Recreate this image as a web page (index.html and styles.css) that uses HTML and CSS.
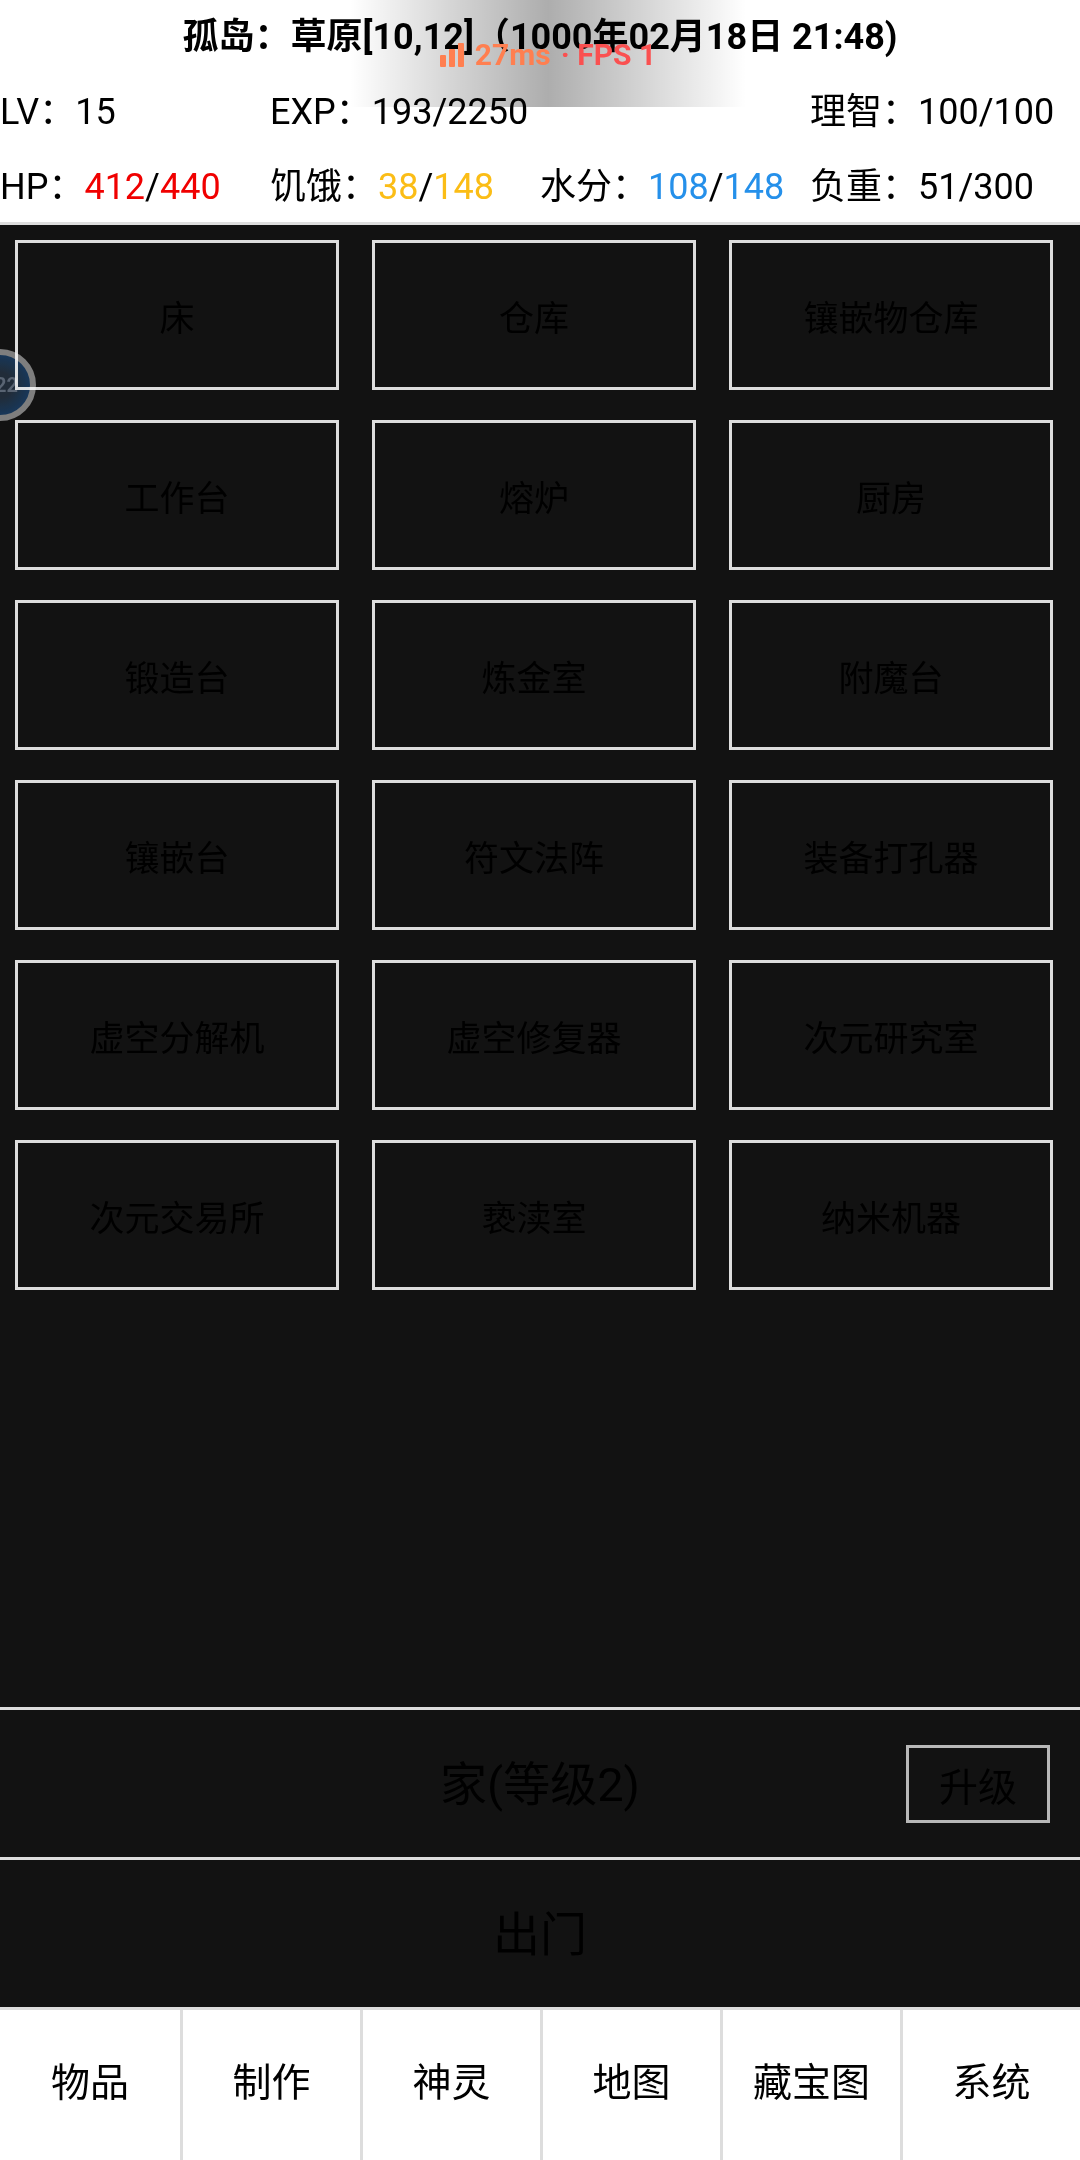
FILE: index.html
```html
<!DOCTYPE html>
<html lang="zh-CN">
<head>
  <meta charset="UTF-8">
  <meta name="viewport" content="width=device-width, initial-scale=1.0">
  <title>孤岛</title>
  <link rel="stylesheet" href="styles.css">
</head>
<body>
  <!-- Status -->
  <header class="status">
    <h1>孤岛：草原[10,12]（1000年02月18日 21:48)</h1>
    <div class="stats">
      <div>LV：15</div>
      <div class="wide">EXP：193/2250</div>
      <div>理智：100/100</div>
      <div>HP：<span class="hp">412</span>/<span class="hp">440</span></div>
      <div>饥饿：<span class="food">38</span>/<span class="food">148</span></div>
      <div>水分：<span class="water">108</span>/<span class="water">148</span></div>
      <div>负重：51/300</div>
    </div>
  </header>

  <!-- Buildings -->
  <main class="buildings">
    <button type="button">床</button>
    <button type="button">仓库</button>
    <button type="button">镶嵌物仓库</button>
    <button type="button">工作台</button>
    <button type="button">熔炉</button>
    <button type="button">厨房</button>
    <button type="button">锻造台</button>
    <button type="button">炼金室</button>
    <button type="button">附魔台</button>
    <button type="button">镶嵌台</button>
    <button type="button">符文法阵</button>
    <button type="button">装备打孔器</button>
    <button type="button">虚空分解机</button>
    <button type="button">虚空修复器</button>
    <button type="button">次元研究室</button>
    <button type="button">次元交易所</button>
    <button type="button">亵渎室</button>
    <button type="button">纳米机器</button>
  </main>

  <!-- House -->
  <section class="house">
    <h2>家(等级2)</h2>
    <button type="button" class="upgrade">升级</button>
  </section>
  <button type="button" class="go-out">出门</button>

  <!-- Bottom menu -->
  <nav class="menu">
    <button type="button">物品</button>
    <button type="button">制作</button>
    <button type="button">神灵</button>
    <button type="button">地图</button>
    <button type="button">藏宝图</button>
    <button type="button">系统</button>
  </nav>

  <!-- Floating network / fps monitor -->
  <div class="monitor">
    <svg class="bars" width="25" height="24" viewBox="0 0 25 24" aria-hidden="true">
      <rect x="0" y="12" width="6" height="12" rx="1"/>
      <rect x="9" y="6" width="6" height="18" rx="1"/>
      <rect x="18" y="0" width="6" height="24" rx="1"/>
    </svg>
    <span class="ping">27ms</span>
    <span class="fps">· FPS 1</span>
  </div>

  <!-- Floating assistant ball -->
  <div class="ball"><span>22</span></div>
</body>
</html>
```

FILE: styles.css
```css
* {
  box-sizing: border-box;
}
body {
  margin: 0;
  min-height: 100vh;
  display: flex;
  flex-direction: column;
  font-family: Roboto, "Noto Sans CJK SC", sans-serif;
  font-size: 36px;
  color: #000;
  background-color: #121212;
}
h1, h2 {
  margin: 0;
}
button {
  font-family: inherit;
  color: #000;
  background: none;
  border: none;
  padding: 0;
  cursor: pointer;
}
.status {
  background-color: white;
  border-bottom: 3px solid #ddd;
}
.status h1 {
  font-size: 36px;
  line-height: 75px;
  text-align: center;
  white-space: nowrap;
}
.stats {
  display: grid;
  grid-template-columns: repeat(4, 1fr);
  margin-bottom: -3px;
  line-height: 75px;
  white-space: nowrap;
}
.stats .wide {
  grid-column: span 2;
}
.hp {
  color: #f00000;
}
.food {
  color: #fbbd16;
}
.water {
  color: #2590ea;
}
.buildings {
  flex: 1;
  display: grid;
  grid-template-columns: repeat(3, 1fr);
  grid-auto-rows: 150px;
  gap: 30px 33px;
  align-content: start;
  padding: 15px 27px 15px 15px;
}
.buildings button {
  border: 3px solid #ddd;
  font-size: 35px;
}
.house {
  display: grid;
  grid-template-columns: 1fr auto 1fr;
  align-items: center;
  height: 150px;
  padding-right: 30px;
  padding-left: 30px;
  border-top: 3px solid #ddd;
}
.house h2 {
  grid-column: 2;
  padding-bottom: 6px;
  font-size: 47px;
  font-weight: normal;
}
.upgrade {
  justify-self: end;
  width: 144px;
  height: 78px;
  border: 3px solid #b8b8b8;
  font-size: 39px;
}
.go-out {
  height: 150px;
  padding-bottom: 6px;
  border-top: 3px solid #ddd;
  font-size: 47px;
}
.menu {
  display: grid;
  grid-template-columns: repeat(6, 1fr);
  height: 153px;
  background-color: white;
  border-top: 3px solid #ddd;
}
.menu button {
  padding-bottom: 12px;
  font-size: 39px;
}
.menu button + button {
  border-left: 3px solid #ddd;
}
.monitor {
  position: absolute;
  top: 0;
  left: calc(50% + 8px);
  transform: translateX(-50%);
  display: flex;
  justify-content: center;
  align-items: center;
  gap: 10px;
  width: 396px;
  height: 107px;
  padding-top: 2px;
  background: linear-gradient(to right, transparent, rgba(0, 0, 0, 0.32) 50%, transparent);
  font-size: 30px;
  font-weight: bold;
}
.bars, .ping {
  color: #ff7f50;
  fill: #ff7f50;
}
.fps {
  color: #fa5050;
}
.ball {
  position: absolute;
  top: 349px;
  left: -36px;
  width: 72px;
  height: 72px;
  padding-right: 12px;
  border: 6px solid #747474;
  border-radius: 50%;
  background: radial-gradient(circle, #101c2a 30%, #06284c 70%);
  mix-blend-mode: screen;
  color: #4c5868;
  font-size: 20px;
  font-weight: bold;
  line-height: 60px;
  text-align: right;
}
```
